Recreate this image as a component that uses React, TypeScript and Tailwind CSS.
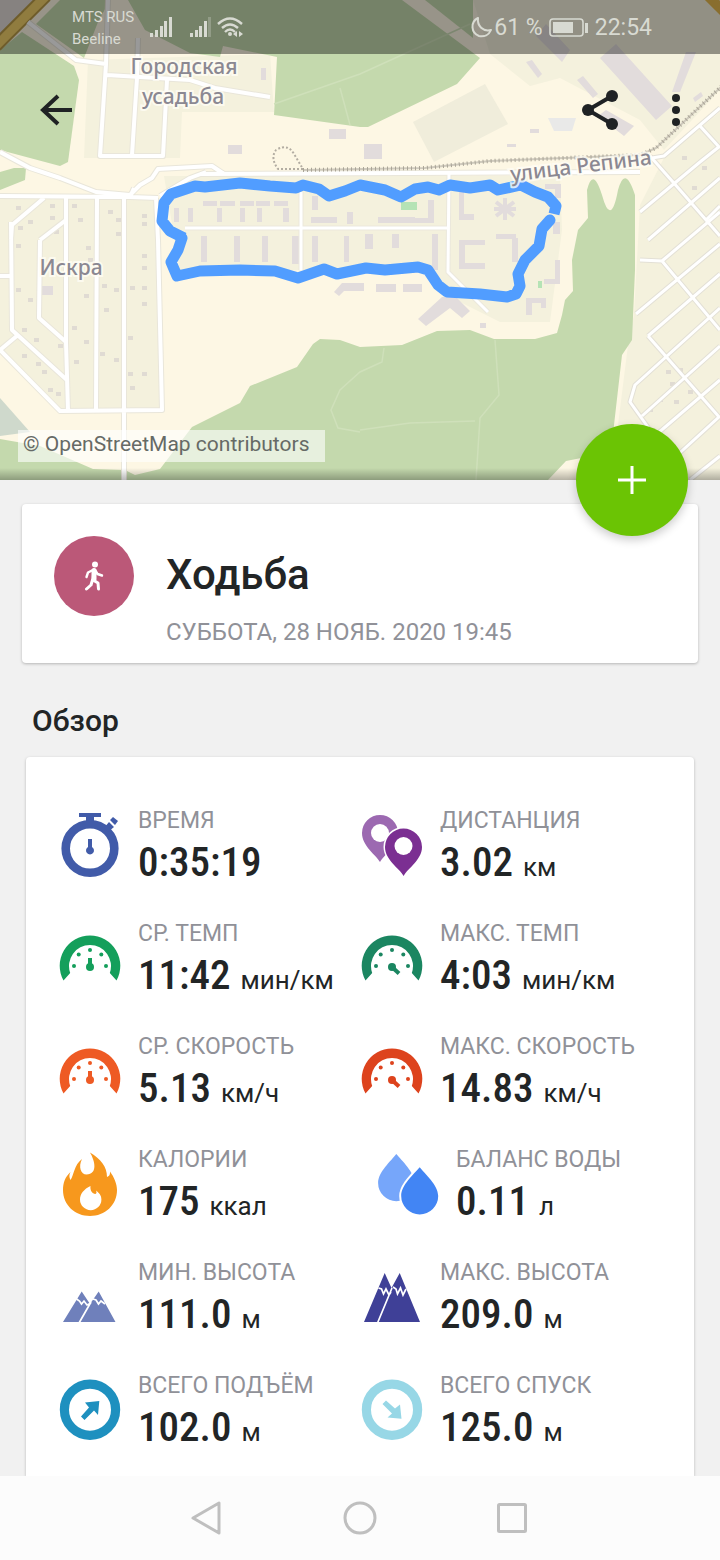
import type { ReactNode } from 'react';

const STREETS_WEST =
  'M28 22 L76 60 L106 64 M108 0 L106 64 L100 156 L163 156 L167 80 M138 38 L137 78 L132 155 M107 75 L190 80 L215 88 L270 97 ' +
  'M0 152 L30 168 L60 178 L96 192 L130 195 L140 185 L152 178 L158 169 L212 166 L224 174 M200 174 L640 172 M160 196 L190 178 L206 172 ' +
  'M0 196 L130 197 L158 198 M130 197 L134 188 M11 240 L12 225 L44 198 M11 222 L12 330 L68 381 M40 240 L66 220 M40 240 L39 318 L66 342 ' +
  'M66 198 L66 342 L68 411 M97 198 L96 411 M124 198 L124 480 M156 198 L158 240 L162 410 L60 411 L0 350 L18 335 M0 276 L12 276';

const STREETS_CENTER = 'M185 228 L448 228 M301 192 L301 270 M449 172 L448 272 L488 312';

const STREETS_EAST =
  'M720 108 L664 156 L640 160 M650 156 L680 190 L720 236 M700 126 L720 148 M640 212 L700 162 L720 146 M648 240 L720 178 M640 260 L662 261 L720 212 ' +
  'M662 261 L720 330 M636 314 L720 244 M706 220 L720 206 M648 336 L720 274 M648 336 L720 418 M720 308 L635 385 L630 402 L650 430 M642 416 L720 346 M650 440 L720 380 M672 460 L720 416 M690 480 L720 456';

const FORESTS = [
  'M60 0 H110 L98 22 L84 58 L36 24 Z',
  'M0 50 L22 32 L74 66 L79 80 L68 162 L60 166 L0 150 Z',
  'M0 172 L14 168 H26 L25 180 L0 190 Z',
  'M128 0 L145 30 L190 53 L220 57 L223 46 L277 57 L274 115 L360 127 L368 127 L457 84 L480 58 L402 0 Z',
  'M425 0 H473 V38 Z',
  'M0 439 L40 446 L93 469 L125 470 L135 475 L160 469 L192 427 L240 403 L250 386 L297 367 L313 344 L320 339 L340 340 L360 347 L402 345 L437 331 L470 330 L494 339 L535 339 L557 333 L562 315 L565 300 L573 291 L572 260 L578 230 L588 218 L587 190 Q593 166 602 195 Q611 228 618 190 Q625 164 635 195 V270 L632 340 L622 355 L614 425 L612 452 L566 461 L548 480 H0 Z',
];

const BUILDINGS =
  'M228 145 h14 v9 h-14 Z M329 129 h17 v10 h-17 Z M364 144 h18 v15 h-18 Z M261 68 h5 v12 h-5 Z ' +
  'M203 201 h14 v5 h-14 Z M220 201 h15 v5 h-15 Z M240 201 h14 v5 h-14 Z M256 201 h14 v5 h-14 Z M274 201 h14 v5 h-14 Z ' +
  'M174 208 h5 v14 h-5 Z M188 208 h5 v14 h-5 Z M217 208 h5 v14 h-5 Z M240 208 h5 v14 h-5 Z M257 208 h5 v14 h-5 Z M283 208 h6 v14 h-6 Z ' +
  'M312 196 h6 v14 h-6 Z M311 217 h26 v6 h-26 Z M347 212 h6 v12 h-6 Z M378 217 h37 v6 h-37 Z M428 200 h6 v23 h-22 v-5 h16 Z ' +
  'M201 236 h6 v26 h-6 Z M234 236 h6 v26 h-6 Z M262 236 h6 v26 h-6 Z M292 236 h7 v28 h-7 Z M312 236 h6 v26 h-6 Z M344 236 h5 v26 h-5 Z M365 234 h8 v15 h-8 Z M392 234 h7 v14 h-7 Z M432 234 h6 v36 h-6 Z ' +
  'M459 192 h5 v22 h10 v6 h-15 Z M459 240 h26 v5 h-20 v18 h20 v6 h-26 Z M496 234 h20 v5 h-20 Z M512 238 h6 v24 h-6 Z ' +
  'M545 184 h16 v14 h-6 v-9 h-10 Z M553 222 h7 v12 h-7 Z M555 260 h5 v24 h-16 v-5 h11 Z M526 298 h20 v10 h-5 v-5 h-9 v12 h-6 Z ' +
  'M334 292 l8 -9 h22 v8 h-20 l-5 5 Z M376 284 h20 v8 h-20 Z M403 284 h19 v8 h-19 Z M418 319 l24 -22 h14 l14 14 -8 7 -12 -10 -24 18 Z ' +
  'M480 323 h6 v5 h-6 Z M41 286 h12 v9 h-12 Z ' +
  'M526 62 l6 -2 10 14 -4 4 Z M577 80 l6 -4 15 18 -5 4 Z M600 58 l16 -14 56 62 -16 14 Z M598 116 l8 -6 28 16 -10 10 Z M672 92 l14 -40 h10 l-16 40 Z M536 36 l10 -12 24 26 -8 12 Z M693 98 l8 -6 2 4 -8 6 Z M530 129 h9 v4 h-9 Z M507 144 h9 v3 h-9 Z';

const ROUTE_TOP =
  'M184 238 L170 231 L162 221 L164 203 L171 194 L195 186 L205 187 L240 183 L270 186 L296 188 L303 185 L319 189 L329 196 L345 191 L360 185 ' +
  'L385 190 L401 197 L415 189 L428 187 L439 190 L450 185 L470 188 L490 185 L498 190 L521 185 L535 192 L548 197 L556 206 L554 214';
const ROUTE_BOTTOM =
  'M550 220 L542 229 L539 246 L525 260 L518 274 L520 286 L516 294 L507 297 L480 294 L447 292 L438 285 L428 270 L418 267 L385 270 L366 268 ' +
  'L337 274 L324 269 L298 278 L275 271 L240 270 L200 271 L177 276 L171 262 L178 250 L182 238';

const RAILWAY = 'M303 170 L425 168 L490 161 L640 155 L656 148 L724 84';

const houses = [
  [18, 208], [20, 228], [18, 246], [30, 222], [52, 206], [52, 218], [56, 232], [74, 206], [80, 220], [88, 248], [110, 212], [118, 220],
  [118, 234], [144, 216], [144, 224], [144, 256], [144, 268], [144, 288], [144, 304], [132, 288], [104, 286], [90, 260], [106, 310],
  [86, 296], [74, 328], [86, 342], [102, 354], [130, 338], [130, 374], [132, 388], [144, 374], [116, 360], [60, 346], [58, 394],
  [38, 364], [24, 356], [44, 372], [50, 390], [30, 300], [24, 330], [36, 340], [18, 290], [116, 290], [76, 362],
  [680, 370], [672, 384], [690, 392], [660, 400], [676, 402], [668, 372], [684, 158], [694, 188], [704, 168], [650, 410],
];

function MapCanvas() {
  return (
    <svg
      className="absolute inset-0 h-full w-full"
      viewBox="0 0 720 480"
      preserveAspectRatio="xMidYMid slice"
      role="img"
      aria-label="Карта маршрута"
    >
      <defs>
        <linearGradient id="mapShade" x1="0" y1="0" x2="0" y2="1">
          <stop offset="0" stopColor="#000" stopOpacity="0" />
          <stop offset="1" stopColor="#000" stopOpacity="0.28" />
        </linearGradient>
      </defs>
      <rect width="720" height="480" fill="#fdf7e4" />

      {/* Residential areas */}
      <g fill="#f4f1dd">
        <path d="M88 60 L270 54 L274 112 L182 112 L180 158 L84 158 Z" />
        <path d="M0 198 H158 L163 410 H60 L0 350 Z" />
        <path d="M164 176 H560 L562 230 L550 322 H500 L440 292 L425 268 L180 272 Z" />
        <path d="M490 54 L473 0 H720 V90 L664 150 L640 120 L560 78 L530 86 Z" />
        <path d="M720 112 L664 158 L640 205 L634 314 L628 345 L618 425 L680 480 H720 Z" />
        <path d="M413 122 L485 84 L508 124 L434 162 Z" fill="#f0eddb" />
      </g>
      <path d="M0 0 H48 L0 50 Z" fill="#dfd9d6" />
      <path d="M0 398 L30 432 L0 436 Z" fill="#cfd9cc" />

      <g fill="#c4d9ad">
        {FORESTS.map((d) => (
          <path key={d} d={d} />
        ))}
      </g>
      <path
        d="M274 104 L360 74 L470 24 M340 88 L350 125 M495 340 L499 395 L480 418 L476 480 M360 430 L410 423 L475 421 M384 348 L382 362 L360 372 L340 390 L331 410 L338 428 L360 432"
        fill="none"
        stroke="#cfe0ba"
        strokeWidth="1.5"
      />

      <path d={BUILDINGS} fill="#e2dcdc" />
      <path d="M505 198 V220 M496 202 L514 216 M514 202 L496 216 M494 209 H516" stroke="#e2dcdc" strokeWidth="4" />
      <path d="M401 202 h16 v8 h-16 Z M538 281 h4 v7 h-4 Z" fill="#b5e3b5" />
      <path d="M548 118 h28 l-4 13 h-18 Z" fill="#e9e9e8" />
      <g fill="#e0dbd3">
        {houses.map(([x, y]) => (
          <rect key={`${x}-${y}`} x={x - 2} y={y - 2} width="5" height="4" />
        ))}
      </g>

      {/* Streets: casing first, then fill */}
      <g fill="none" strokeLinejoin="round">
        <path d="M-4 46 L46 -4" stroke="#b89a48" strokeWidth="13" />
        <path d="M-4 46 L46 -4" stroke="#f0cf6a" strokeWidth="9" />
        <path d="M708 -4 L724 12" stroke="#e5b84e" strokeWidth="10" />
        <path d={STREETS_WEST} stroke="#e9e6da" strokeWidth="6" />
        <path d={STREETS_CENTER} stroke="#ebe8dc" strokeWidth="5" />
        <path d={STREETS_EAST} stroke="#e3e0d6" strokeWidth="5" />
        <path d={STREETS_WEST} stroke="#fff" strokeWidth="4" />
        <path d={STREETS_CENTER} stroke="#fff" strokeWidth="3" />
        <path d={STREETS_EAST} stroke="#fff" strokeWidth="3" />
        <path d="M303 169 L278 169 Q270 158 276 150 Q288 143 294 154 L303 169" stroke="#b3ada2" strokeWidth="2" strokeDasharray="2 2" />
        <path d={RAILWAY} stroke="#cfcabd" strokeWidth="2" />
        <path d={RAILWAY} stroke="#aaa597" strokeWidth="4" strokeDasharray="1 3" />
      </g>

      <g fill="none" stroke="#519dff" strokeWidth="11" strokeLinejoin="round">
        <path d={ROUTE_TOP} />
        <path d={ROUTE_BOTTOM} strokeLinecap="round" />
      </g>

      <g
        fill="#8b8892"
        stroke="#fffdf5"
        strokeWidth="4"
        strokeOpacity="0.8"
        paintOrder="stroke"
        textAnchor="middle"
        className="font-['Noto_Sans',sans-serif] text-[21px] font-medium"
      >
        <text x="184" y="74">Городская</text>
        <text x="183" y="104">усадьба</text>
        <text x="71" y="275">Искра</text>
        <text x="581" y="173" transform="rotate(-7 581 166)">улица Репина</text>
      </g>
      <rect y="468" width="720" height="12" fill="url(#mapShade)" />
    </svg>
  );
}

function StatusBar() {
  return (
    <div className="relative flex h-[54px] items-center justify-between bg-black/40 pr-[68px] pl-[72px] text-[#d8dad2]">
      <div className="flex items-center">
        <div className="w-[76px] pt-px text-[15px] leading-[22px]">
          <div>MTS RUS</div>
          <div>Beeline</div>
        </div>
        <svg width="96" height="24" viewBox="0 0 96 24" fill="currentColor" aria-hidden="true">
          <path d="M2 18h3v4H2zM7 15h3v7H7zM12 11h3v11h-3zM16 6h3v16h-3zM21 2h3v20h-3z" />
          <path d="M42 18h3v4h-3zM47 15h3v7h-3zM51 11h3v11h-3zM56 6h3v16h-3z" />
          <path d="M60 2h3v20h-3z" opacity="0.3" />
          <g fill="none" stroke="currentColor" strokeWidth="2.4">
            <path d="M70 9 Q82 -2 94 9" />
            <path d="M74 13 Q82 6 90 13" />
            <path d="M77 17 Q82 12 87 17" />
          </g>
          <circle cx="82" cy="19" r="2" />
          <path d="M89 16v6l-4-3zM91 16v6l4-3z" />
        </svg>
      </div>
      <div className="flex items-center pt-0.5 text-[23px] leading-[28px]">
        <svg width="24" height="24" viewBox="0 0 24 24" fill="none" stroke="currentColor" strokeWidth="2" strokeLinejoin="round" aria-hidden="true">
          <path d="M8 2 C0 6 1 17 9 20 C14 21 19 19 21 14 C13 16 7 10 8 2 Z" />
        </svg>
        <span>61 %</span>
        <svg className="mr-1.5 ml-1.5" width="40" height="20" viewBox="0 0 40 20" aria-hidden="true">
          <rect x="1" y="1" width="33" height="17" rx="3" fill="none" stroke="currentColor" strokeWidth="1.6" />
          <rect x="4" y="4" width="20" height="11" fill="currentColor" />
          <rect x="36" y="5" width="3" height="10" fill="currentColor" />
        </svg>
        <span>22:54</span>
      </div>
    </div>
  );
}

function AppBar() {
  return (
    <div className="relative flex h-28 items-center justify-between px-8 text-[#1f2224]">
      <button type="button" aria-label="Назад" className="flex size-12 items-center justify-center">
        <svg width="32" height="32" viewBox="0 0 32 32" fill="none" stroke="currentColor" strokeWidth="4">
          <path d="M32 16H3M18 2L3 16l15 14" />
        </svg>
      </button>
      <div className="flex gap-10">
        <button type="button" aria-label="Поделиться" className="flex size-12 items-center justify-center">
          <svg width="36" height="40" viewBox="0 0 36 40" fill="currentColor">
            <path d="M30 6L6 20l24 14" fill="none" stroke="currentColor" strokeWidth="4" />
            <circle cx="6" cy="20" r="6" />
            <circle cx="30" cy="6" r="6" />
            <circle cx="30" cy="34" r="6" />
          </svg>
        </button>
        <button type="button" aria-label="Ещё" className="flex h-12 w-6 items-center justify-center">
          <svg width="8" height="32" viewBox="0 0 8 32" fill="currentColor">
            <circle cx="4" cy="4" r="4" />
            <circle cx="4" cy="16" r="4" />
            <circle cx="4" cy="28" r="4" />
          </svg>
        </button>
      </div>
    </div>
  );
}

function Icon({ color, children }: { color: string; children: ReactNode }) {
  return (
    <svg width="64" height="80" viewBox="0 0 64 80" fill={color} stroke={color} strokeWidth="0" className="shrink-0" aria-hidden="true">
      {children}
    </svg>
  );
}

function TimerIcon() {
  return (
    <Icon color="#415ba9">
      <circle cx="32" cy="44.5" r="24.3" fill="none" strokeWidth="8.6" />
      <path d="M21 9h22v4h-7v5h-8v-5h-7z" />
      <path d="M46 24l5-6 5 5-6 5zM52 16l3-3 5 4-3 4z" />
      <path d="M30 35h4v8a4 4 0 1 1-4 0z" />
    </Icon>
  );
}

function GaugeIcon({ color, max = false }: { color: string; max?: boolean }) {
  return (
    <Icon color={color}>
      <path d="M5.5 63.5A30.3 30.3 0 1 1 58.5 63.5L51.8 56A21 21 0 1 0 12.2 56Z" />
      <circle cx="16" cy="49" r="2" />
      <circle cx="20.7" cy="37.5" r="2" />
      <circle cx="32" cy="33" r="2" />
      <circle cx="43.3" cy="37.5" r="2" />
      <circle cx="48" cy="49" r="2" />
      <circle cx="32" cy="50" r="4" />
      <path d={max ? 'M32 50L39 56.5' : 'M32 50V41'} strokeWidth="4" />
    </Icon>
  );
}

function PinsIcon() {
  return (
    <Icon color="#9c69b1">
      <path d="M20 58C16 51 2 42 2 29a18 18 0 0 1 36 0C38 42 24 51 20 58Z" />
      <circle cx="20" cy="29" r="9" fill="#fff" />
      <path d="M43.7 72C40 65 25 56 25 43a18.5 18.5 0 0 1 37 0C62 56 47 65 43.7 72Z" fill="#7b2f92" stroke="#fff" strokeWidth="3" paintOrder="stroke" />
      <circle cx="43.5" cy="42" r="9" fill="#fff" />
    </Icon>
  );
}

function FlameIcon() {
  return (
    <Icon color="#f7981d">
      <path d="M32 9.5C43 16 49 24 49 34C52 33 52 31 52 28.5C56 34 59 41 59 47C59 62 47 73 32 73C17 73 5 62 5 47C5 40 7 34 12.5 29C11 32 11 34 12.5 37C16 32 16 22 24 16C20 24 23 31.5 28.5 31.5C40 31 37 18 32 9.5Z" />
      <path d="M32.5 43C26 46 22 51 22 56.5A10.7 10.7 0 0 0 43.4 56.5C43.4 53.5 42.5 51 38 47.5C39 49.5 38.5 51 37 51C33.5 50 32 47 32.5 43Z" fill="#fff" />
    </Icon>
  );
}

function DropsIcon() {
  return (
    <Icon color="#76a6fa">
      <path d="M20.3 11C26 18 38.5 29 38.5 40a18 18 0 0 1-36.4 0C2.1 29 15 18 20.3 11Z" />
      <path d="M43.7 24.3C49 31 62.2 42 62.2 53a18.5 18.5 0 0 1-37 0C25.2 42 38 31 43.7 24.3Z" fill="#4285f4" stroke="#fff" strokeWidth="4" paintOrder="stroke" />
    </Icon>
  );
}

function LowMountainsIcon() {
  return (
    <Icon color="#6f80bb">
      <path d="M5 66L23.7 35.5L32 48L40.7 35.5L57.5 66Z" />
      <path d="M21 67L33 46M18.5 43l3 2 2 3 2.5-3 3 4 4-2M35 43l3 1 2.5 4 2.5-3 4 3" fill="none" stroke="#fff" strokeWidth="1.7" />
    </Icon>
  );
}

function HighMountainsIcon() {
  return (
    <Icon color="#3f4097">
      <path d="M4 66L24.7 17L31.5 32L39.7 17L60 66Z" />
      <path d="M17.5 67L32 32M18.5 32l3 1 2 5 2.5-5 3 6 2-3M33 31l3 2 1.5 5 3-6 2.5 7 3-6" fill="none" stroke="#fff" strokeWidth="1.7" />
    </Icon>
  );
}

function RingArrowIcon({ color, down = false }: { color: string; down?: boolean }) {
  return (
    <Icon color={color}>
      <circle cx="32" cy="40.7" r="25.6" fill="none" strokeWidth="9.2" />
      <path
        d="M41.3 32L40 46L36 41.5L26.5 51L23 47.5L31 38.5L27 33.5Z"
        transform={down ? 'rotate(90 32.5 41)' : undefined}
      />
    </Icon>
  );
}

interface Stat {
  label: string;
  value: string;
  unit?: string;
  icon: ReactNode;
  indent?: boolean;
}

const stats: Stat[] = [
  { label: 'ВРЕМЯ', value: '0:35:19', icon: <TimerIcon /> },
  { label: 'ДИСТАНЦИЯ', value: '3.02', unit: 'км', icon: <PinsIcon /> },
  { label: 'СР. ТЕМП', value: '11:42', unit: 'мин/км', icon: <GaugeIcon color="#149f5b" /> },
  { label: 'МАКС. ТЕМП', value: '4:03', unit: 'мин/км', icon: <GaugeIcon color="#1b8661" max /> },
  { label: 'СР. СКОРОСТЬ', value: '5.13', unit: 'км/ч', icon: <GaugeIcon color="#ee5a24" /> },
  { label: 'МАКС. СКОРОСТЬ', value: '14.83', unit: 'км/ч', icon: <GaugeIcon color="#dd431d" max /> },
  { label: 'КАЛОРИИ', value: '175', unit: 'ккал', icon: <FlameIcon /> },
  { label: 'БАЛАНС ВОДЫ', value: '0.11', unit: 'л', icon: <DropsIcon />, indent: true },
  { label: 'МИН. ВЫСОТА', value: '111.0', unit: 'м', icon: <LowMountainsIcon /> },
  { label: 'МАКС. ВЫСОТА', value: '209.0', unit: 'м', icon: <HighMountainsIcon /> },
  { label: 'ВСЕГО ПОДЪЁМ', value: '102.0', unit: 'м', icon: <RingArrowIcon color="#1e90bf" /> },
  { label: 'ВСЕГО СПУСК', value: '125.0', unit: 'м', icon: <RingArrowIcon color="#97d7e6" down /> },
];

function StatItem({ label, value, unit, icon, indent }: Stat) {
  return (
    <div className={indent ? 'flex gap-4 pl-4' : 'flex gap-4'}>
      {icon}
      <dl className="whitespace-nowrap">
        <dt className="text-[23px] leading-[34px] text-[#909198]">{label}</dt>
        <dd className="flex items-baseline gap-2.5 leading-[48px] text-[#222526]">
          <span className="font-['Roboto_Condensed','Roboto',sans-serif] text-[41px] font-medium">{value}</span>
          {unit && <span className="text-[26px] leading-8">{unit}</span>}
        </dd>
      </dl>
    </div>
  );
}

function NavBar() {
  return (
    <nav className="flex h-[84px] items-center justify-center gap-[104px] bg-[#fcfcfc] text-[#bfbfbf]">
      <button type="button" aria-label="Назад" className="flex size-12 items-center justify-center">
        <svg width="36" height="36" viewBox="0 0 36 36" fill="none" stroke="currentColor" strokeWidth="3" strokeLinejoin="round">
          <path d="M29 3V33L3 18Z" />
        </svg>
      </button>
      <button type="button" aria-label="Домой" className="flex size-12 items-center justify-center">
        <svg width="36" height="36" viewBox="0 0 36 36" fill="none" stroke="currentColor" strokeWidth="3">
          <circle cx="18" cy="18" r="15" />
        </svg>
      </button>
      <button type="button" aria-label="Недавние" className="flex size-12 items-center justify-center">
        <svg width="36" height="36" viewBox="0 0 36 36" fill="none" stroke="currentColor" strokeWidth="3">
          <rect x="4.5" y="4.5" width="27" height="27" rx="1" />
        </svg>
      </button>
    </nav>
  );
}

export default function App() {
  return (
    <div className="flex min-h-screen flex-col bg-[#f1f1f1] font-['Roboto','Liberation_Sans',sans-serif]">
      <header className="relative flex h-[480px] flex-col">
        <MapCanvas />
        <StatusBar />
        <AppBar />
        <div className="relative mt-auto mb-[18px] ml-[18px] self-start bg-white/60 pr-4 pb-1 pl-[5px] text-[21px] leading-7 text-[#666a66]">
          © OpenStreetMap contributors
        </div>
        <button
          type="button"
          aria-label="Добавить"
          className="absolute right-8 -bottom-14 z-10 flex size-28 items-center justify-center rounded-full bg-[#6bc404] shadow-[0_4px_10px_rgba(0,0,0,0.2)]"
        >
          <svg width="28" height="28" viewBox="0 0 28 28" stroke="#fff" strokeWidth="3">
            <path d="M14 0V28M0 14H28" />
          </svg>
        </button>
      </header>

      <main className="flex flex-1 flex-col pt-6">
        <section className="mx-[22px] flex gap-8 rounded bg-white px-8 pt-8 pb-[13px] shadow-[0_1px_3px_rgba(0,0,0,0.25)]">
          <div className="flex size-20 items-center justify-center rounded-full bg-[#bb5878]">
            <svg width="20" height="30" viewBox="0 0 20 30" fill="none" stroke="#fff" strokeWidth="3" strokeLinecap="round" strokeLinejoin="round" aria-hidden="true">
              <circle cx="11" cy="3.5" r="3" fill="#fff" stroke="none" />
              <path d="M10 9L9 19L14 22L14.5 28" />
              <path d="M9 9L4 11.5L2.5 16M11 9L13.5 13L18 14.5" strokeWidth="2.4" />
              <path d="M8.5 19L7 24L2.5 28" />
              <path d="M10 9.5V18" strokeWidth="5" />
            </svg>
          </div>
          <div className="pt-3">
            <h1 className="text-[42px] leading-[54px] font-medium text-[#222526]">Ходьба</h1>
            <p className="pt-3 text-[24px] leading-9 text-[#909198]">СУББОТА, 28 НОЯБ. 2020 19:45</p>
          </div>
        </section>

        <h2 className="px-8 pt-[41px] pb-[19px] text-[30px] leading-[34px] font-medium text-[#222526]">Обзор</h2>

        <section className="mx-[26px] flex-1 rounded-t bg-white px-8 pt-[47px] shadow-[0_1px_3px_rgba(0,0,0,0.25)]">
          <div className="grid grid-cols-2 gap-y-[31px]">
            {stats.map((stat) => (
              <StatItem key={stat.label} {...stat} />
            ))}
          </div>
        </section>
      </main>

      <div className="relative">
        <NavBar />
      </div>
    </div>
  );
}
